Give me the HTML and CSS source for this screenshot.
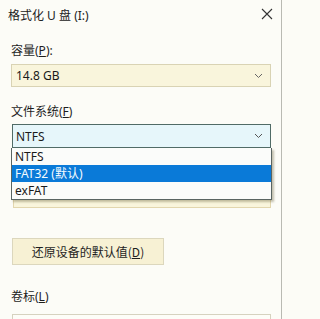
FILE: index.html
```html
<!DOCTYPE html>
<html lang="zh">
<head>
<meta charset="utf-8">
<link rel="stylesheet" href="styles.css">
</head>
<body>
<div class="window">
  <div class="titlebar">
    <span class="title">格式化 U 盘 (I:)</span>
    <svg class="close" width="12" height="12" viewBox="0 0 12 12"><path d="M1 1 L11 11 M11 1 L1 11" stroke="#333" stroke-width="1.1" fill="none"/></svg>
  </div>
  <div class="content">
    <div class="label lbl-cap">容量(<u>P</u>):</div>
    <div class="combo combo-cap">
      <span class="val">14.8 GB</span>
      <svg class="chev" width="9" height="6" viewBox="0 0 9 6"><path d="M1 1 L4.5 4.5 L8 1" stroke="#666" stroke-width="1" fill="none"/></svg>
    </div>
    <div class="label lbl-fs">文件系统(<u>F</u>)</div>
    <div class="fs-wrap">
      <div class="combo combo-fs">
        <span class="val">NTFS</span>
        <svg class="chev" width="9" height="6" viewBox="0 0 9 6"><path d="M1 1 L4.5 4.5 L8 1" stroke="#555" stroke-width="1" fill="none"/></svg>
      </div>
      <ul class="dropdown">
        <li>NTFS</li>
        <li class="sel">FAT32 (默认)</li>
        <li>exFAT</li>
      </ul>
    </div>
    <div class="spacer-alloc"></div>
    <div class="combo combo-alloc"></div>
    <button class="btn">还原设备的默认值(<u>D</u>)</button>
    <div class="label lbl-vol">卷标(<u>L</u>)</div>
    <div class="textbox"></div>
  </div>
</div>
</body>
</html>
```

FILE: styles.css
```css
html, body {
  margin: 0;
  padding: 0;
}
body {
  width: 284px;
  height: 319px;
  overflow: hidden;
  background: #fcfcf6;
  font-family: "Noto Sans", "Noto Sans CJK SC", sans-serif;
  font-size: 12px;
  color: #1a1a1a;
}
.window {
  width: 281px;
  height: 319px;
  overflow: hidden;
  border-right: 1px solid #b9bab2;
  box-sizing: content-box;
  background: #fcfcf7;
}
.titlebar {
  height: 30px;
  display: flex;
  align-items: center;
  justify-content: space-between;
  padding: 0 8px 0 8px;
}
.title {
  font-size: 12px;
  color: #222;
  margin-top: -1px;
}
.close {
  margin-top: -2px;
}
.content {
  display: flex;
  flex-direction: column;
  padding: 0 10px 0 11px;
}
.label {
  font-size: 12px;
  line-height: 16px;
  color: #1e1e1e;
}
.label u {
  text-underline-offset: 1px;
}
.lbl-cap { margin-top: 13px; }
.combo {
  height: 23px;
  box-sizing: border-box;
  display: flex;
  align-items: center;
  justify-content: space-between;
  padding: 0 7px 0 4px;
  font-size: 12px;
}
.combo-cap {
  margin-top: 5px;
  background: #f9f5dc;
  border: 1px solid #d9d3b4;
}
.lbl-fs { margin-top: 17px; }
.fs-wrap {
  position: relative;
  margin-top: 4px;
  margin-left: 1px;
}
.combo-fs {
  height: 24px;
  background: #e6f6fa;
  border: 1px solid #506b66;
  padding-left: 3px;
}
.dropdown {
  position: absolute;
  left: -1px;
  top: 24px;
  width: 259px;
  margin: 0;
  padding: 0;
  list-style: none;
  background: #fbfcfa;
  border: 1px solid #5a6562;
  border-top: none;
  box-shadow: 2px 2px 2px rgba(90, 80, 40, 0.35);
  z-index: 2;
}
.dropdown li {
  height: 17px;
  line-height: 17px;
  padding-left: 3px;
  font-size: 12px;
  color: #1a1a1a;
}
.dropdown li.sel {
  background: #0a7ad8;
  color: #f4fbff;
}
.spacer-alloc { height: 37px; }
.combo-alloc {
  margin-left: 2px;
  background: #f9f5dc;
  border: 1px solid #e2d6ae;
}
.btn {
  margin-top: 30px;
  margin-left: 1px;
  width: 152px;
  height: 27px;
  background: #f7f1d4;
  border: 1px solid #dcd7bd;
  font-family: "Noto Sans CJK SC", sans-serif;
  font-size: 12px;
  color: #1e1e1e;
  padding: 0;
  align-self: flex-start;
}
.lbl-vol { margin-top: 24px; }
.textbox {
  margin-top: 9px;
  margin-left: 1px;
  height: 8px;
  background: #fdfdf8;
  border: 1px solid #d6d2bf;
  border-bottom: none;
}
```
